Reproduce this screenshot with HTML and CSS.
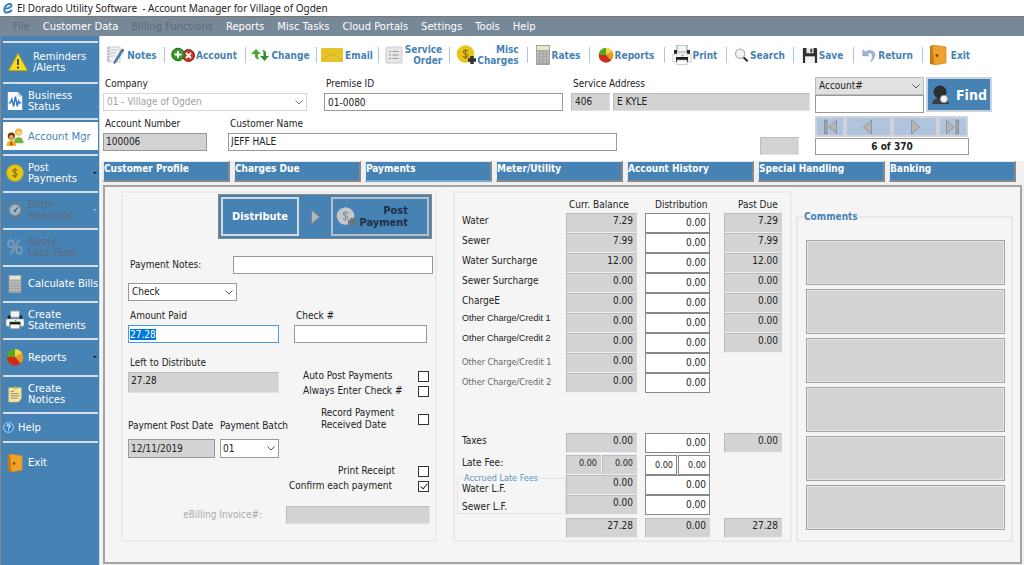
FILE: index.html
```html
<!DOCTYPE html>
<html lang="en">
<head>
    <meta charset="UTF-8">
    <meta name="viewport" content="width=device-width, initial-scale=1.0">
    <title>El Dorado Utility Software</title>
    <link rel="stylesheet" href="styles.css">
</head>
<body>
    <!-- icons used more than once -->
    <svg class="sprite" aria-hidden="true">
        <symbol id="i-coin" viewBox="0 0 20 20">
            <circle cx="10" cy="10" r="9.3" fill="#e8c51c" stroke="#cfa912"/>
            <path d="M12.8 7.2C12 6 8 5.600 7.500 7.600c-.3 2 5 2 5 4.300-.2 2.200-4.200 2-5.400.5M10 4.500v11" fill="none" stroke="#8c7310" stroke-width="1.300"/>
        </symbol>
        <symbol id="i-calc" viewBox="0 0 20 20">
            <path d="M3 0h14v20H3z" fill="#a3a3a3"/>
            <path d="M4 1h12v4H4z" fill="#e4e8cf"/>
            <path d="M4 7.500h12M4 10.500h12M4 13.500h12M4 16.500h12" stroke="#c4c4c4" stroke-width="2" stroke-dasharray="2 1.300"/>
        </symbol>
        <symbol id="i-print" viewBox="0 0 20 20">
            <path d="M5 0h10v7H5z" fill="#f4f4f4" stroke="#999"/>
            <path d="M2 5h3v4h10V5h3v6H2z" fill="#222"/>
            <rect x="0" y="9" width="20" height="8" rx="2" fill="#f2f2f2" stroke="#bbb" stroke-width=".6"/>
            <path d="M4 12h12v5H4z" fill="#1d1d1d"/>
            <path d="M5 15h10v4.500H5z" fill="#fff" stroke="#aaa" stroke-width=".6"/>
            <path d="M9.500 10h2v1.200h-2z" fill="#4c3"/>
        </symbol>
        <symbol id="i-pie" viewBox="0 0 20 20">
            <circle cx="10" cy="10.500" r="9" fill="#a8801c"/>
            <path d="M10 10V1a9 9 0 0 0-9 9z" fill="#58a51f"/>
            <path d="M10 10V1a9 9 0 0 1 8 5z" fill="#f2d445"/>
            <path d="M10 10l8-4a9 9 0 0 1-2 11z" fill="#e89a26"/>
            <path d="M10 10l6 7A9 9 0 0 1 1 10z" fill="#cf2a1b"/>
        </symbol>
        <symbol id="i-door" viewBox="0 0 20 20">
            <path d="M2 1l5-1v20l-5-1z" fill="#c77a14"/>
            <path d="M4 0l14 2v16L6 20z" fill="#eea12b" stroke="#d38419" stroke-width=".7"/>
            <circle cx="9" cy="10.500" r="1.400" fill="#7c4b08"/>
        </symbol>
        <symbol id="i-first" viewBox="0 0 16 16">
            <path d="M2.500 1h2.600v14H2.500z" fill="#a5a5a5" stroke="#777" stroke-width=".6"/>
            <path d="M14.500 1.500v13L7 8z" fill="#b5b5b5" stroke="#777" stroke-width=".6"/>
        </symbol>
        <symbol id="i-tri" viewBox="0 0 16 16">
            <path d="M4.500 1v14L12.500 8z" fill="#b5b5b5" stroke="#777" stroke-width=".6"/>
        </symbol>
    </svg>

    <header class="titlebar">
        <svg class="logo" viewBox="0 0 12 12"><path d="M2.500 6.500C5 7 9.500 5.500 9.500 3.500 9 1 5 1.500 3 5c-1.800 3.500-.5 6 2.500 5.500 2-.3 3.500-1.500 4.500-2.500" fill="none" stroke="#2f7fc0" stroke-width="1.900"/></svg>
        <span>El Dorado Utility Software&nbsp; - Account Manager for Village of Ogden</span>
    </header>

    <nav class="menubar">
        <button disabled>File</button>
        <button>Customer Data</button>
        <button disabled>Billing Functions</button>
        <button>Reports</button>
        <button>Misc Tasks</button>
        <button>Cloud Portals</button>
        <button>Settings</button>
        <button>Tools</button>
        <button>Help</button>
    </nav>

    <div class="shell">
        <aside class="sidebar">
            <button class="side first">
                <svg viewBox="0 0 20 20"><path d="M10 1.500L19.300 18.500H.7z" fill="#f5dc1c" stroke="#c9a50c" stroke-linejoin="round"/><path d="M10 7v6M10 14.500v2" stroke="#333" stroke-width="1.700"/></svg>
                <span>Reminders<br>/Alerts</span>
            </button>
            <button class="side short">
                <svg viewBox="0 0 20 20"><path d="M2 0h11l5 5v15H2z" fill="#f6f9fc"/><path d="M13 0v5h5z" fill="#c3d3e4"/><path d="M3 12h2l1.500-4 2 8 2-11 2 11 1.500-6 1 2h2" fill="none" stroke="#2474c6" stroke-width="1.500"/></svg>
                <span>Business<br>Status</span>
            </button>
            <button class="side short active">
                <svg viewBox="0 0 20 20"><circle cx="14" cy="4.500" r="4" fill="#e8b32a"/><circle cx="14" cy="5.500" r="2.600" fill="#f6cf8e"/><path d="M8.500 17c0-9 11-9 11 0z" fill="#6db33c"/><circle cx="6" cy="9" r="4" fill="#6e3a14"/><circle cx="6" cy="10.300" r="2.600" fill="#e8a35b"/><path d="M.5 20c0-8 11-8 11 0z" fill="#e9b520"/><path d="M6 14l1.500 5h-3z" fill="#c62a1d"/></svg>
                <span>Account Mgr</span>
            </button>
            <button class="side has-menu">
                <svg><use href="#i-coin"/></svg>
                <span>Post<br>Payments</span>
            </button>
            <button class="side has-menu" disabled>
                <svg viewBox="0 0 20 20"><circle cx="10" cy="10" r="7.500" fill="#9db6cb" stroke="#687e92" stroke-width="3"/><path d="M10 11l3-4" stroke="#50667a" stroke-width="1.500"/><circle cx="10" cy="11" r="1.300" fill="#50667a"/></svg>
                <span>Enter<br>Readings</span>
            </button>
            <button class="side" disabled>
                <svg viewBox="0 0 20 20"><g fill="none" stroke="#7f9ab5" stroke-width="2"><ellipse cx="5.500" cy="6.500" rx="3.200" ry="4"/><ellipse cx="14.500" cy="13.500" rx="3.200" ry="4"/><path d="M15 2L5 18"/></g></svg>
                <span>Apply<br>Late Fees</span>
            </button>
            <button class="side short">
                <svg><use href="#i-calc"/></svg>
                <span>Calculate Bills</span>
            </button>
            <button class="side">
                <svg><use href="#i-print"/></svg>
                <span>Create<br>Statements</span>
            </button>
            <button class="side has-menu">
                <svg><use href="#i-pie"/></svg>
                <span>Reports</span>
            </button>
            <button class="side">
                <svg viewBox="0 0 20 20"><path d="M3 3h14v12l-3 4H3z" fill="#f3e6a4" stroke="#d1bd62" stroke-width=".6"/><path d="M5 7h4M5 9.500h9M5 12h10M5 14.500h8" stroke="#8d8460"/><path d="M10 1l3 4H8z" fill="#e2c22c"/></svg>
                <span>Create<br>Notices</span>
            </button>
            <button class="side help">
                <svg viewBox="0 0 12 12"><circle cx="6" cy="6" r="5.300" fill="#2f7bd0" stroke="#cfe0f2"/><path d="M4.300 4.800c0-2.300 3.500-2.200 3.500-.2C7.800 5.800 6 5.800 6 7.200M6 8.200v1.300" fill="none" stroke="#fff" stroke-width="1.200"/></svg>
                <span>Help</span>
            </button>
            <button class="side exit">
                <svg><use href="#i-door"/></svg>
                <span>Exit</span>
            </button>
        </aside>

        <main class="main">
            <div class="toolbar">
                <button>
                    <svg viewBox="0 0 20 20"><path d="M2 2h12v15H2z" fill="#f3f3f3" stroke="#ccc"/><path d="M4 5h8M4 8h6M4 11h5" stroke="#b8c4d0"/><path d="M1 3h3M1 6h3M1 9h3M1 12h3M1 15h3" stroke="#999"/><path d="M18 5l-8 12-2 2 .5-3L16 4z" fill="#4f86bd" stroke="#34506c" stroke-width=".6"/></svg>
                    <span>Notes</span>
                </button>
                <button>
                    <svg class="wide" viewBox="0 0 24 20"><circle cx="17.500" cy="10.500" r="6" fill="#c3392b" stroke="#7e1c12"/><path d="M15 8l5 5M20 8l-5 5" stroke="#fff" stroke-width="1.800"/><circle cx="7" cy="9.500" r="6.300" fill="#3a9a2b" stroke="#1f6a14"/><path d="M7 6v7M3.500 9.500h7" stroke="#fff" stroke-width="2"/></svg>
                    <span>Account</span>
                </button>
                <button>
                    <svg viewBox="0 0 20 20"><path d="M1 9l5-5 5 5H8v3c0 1 1 2 2 2-3 1-5-1-5-3V9z" fill="#4ba62e"/><path d="M10 11l4.500 5 4.500-5h-3V8c0-2-2-3-4-3 1 1 1.500 1.500 1.500 3v3z" fill="#2e8f27"/></svg>
                    <span>Change</span>
                </button>
                <button>
                    <svg class="wide" viewBox="0 0 24 20"><rect x="1" y="3" width="22" height="14" rx="1.500" fill="#e6c52c"/><path d="M1 4l11 7 11-7M1 16l8-6M23 16l-8-6" fill="none" stroke="#d6b220"/></svg>
                    <span>Email</span>
                </button>
                <button>
                    <svg viewBox="0 0 20 20"><rect x="2" y="2" width="16" height="16" rx="1" fill="#e6e6e6" stroke="#ccc"/><path d="M5 6.500h2M5 10h2M5 13.500h2M8.500 6.500h6M8.500 10h6M8.500 13.500h6" stroke="#999"/></svg>
                    <span>Service<br>Order</span>
                </button>
                <button>
                    <svg viewBox="0 0 20 20"><circle cx="9.500" cy="9" r="8.800" fill="#e8c51c"/><path d="M12 6.500c-1-1.500-4.500-1.500-4.700.4 0 2 4.700 1.600 4.700 4-.2 2-4 2-5 .3M9.500 4v10" fill="none" stroke="#8c7310" stroke-width="1.200"/><path d="M16 11v8M12 15h8" stroke="#333" stroke-width="3.500"/></svg>
                    <span>Misc<br>Charges</span>
                </button>
                <button>
                    <svg class="slim" viewBox="3 0 14 20"><path d="M3 0h14v20H3z" fill="#a3a3a3"/><path d="M4 1h12v4H4z" fill="#e4e8cf"/><path d="M4 7.500h12M4 10.500h12M4 13.500h12M4 16.500h12" stroke="#c4c4c4" stroke-width="2" stroke-dasharray="2 1.300"/></svg>
                    <span>Rates</span>
                </button>
                <button>
                    <svg class="slim"><use href="#i-pie"/></svg>
                    <span>Reports</span>
                </button>
                <button>
                    <svg><use href="#i-print"/></svg>
                    <span>Print</span>
                </button>
                <button>
                    <svg class="slim" viewBox="0 0 18 20"><path d="M11 12l5.500 5" stroke="#333" stroke-width="2.500"/><circle cx="8" cy="8.500" r="5.200" fill="#eef3f6" stroke="#b5b5b5" stroke-width="1.500"/></svg>
                    <span>Search</span>
                </button>
                <button>
                    <svg class="slim" viewBox="0 0 18 20"><path d="M1 2h15l1 1v16H1z" fill="#2d2f33"/><path d="M5 2h8v6H5z" fill="#e9e9e9"/><path d="M9.500 3h2v4h-2z" fill="#2d2f33"/><path d="M3.500 11.500h11V19h-11z" fill="#f4f4f4"/></svg>
                    <span>Save</span>
                </button>
                <button>
                    <svg class="slim" viewBox="0 0 18 20"><path d="M2 4v7h7L6.800 8.600C12 6 15 10 10.500 18 20 11 15.500 1 4.500 6.500z" fill="#9db3d3" stroke="#8299bd" stroke-width=".5"/></svg>
                    <span>Return</span>
                </button>
                <button>
                    <svg><use href="#i-door"/></svg>
                    <span>Exit</span>
                </button>
            </div>

            <section class="account">
                <div class="account-fields">
                    <div class="line">
                        <div class="field company">
                            <label for="company">Company</label>
                            <select id="company" disabled><option>01 - Village of Ogden</option></select>
                        </div>
                        <div class="field premise">
                            <label for="premise">Premise ID</label>
                            <input id="premise" type="text" value="01-0080">
                        </div>
                        <div class="field address">
                            <label for="street-no">Service Address</label>
                            <div class="pair">
                                <input id="street-no" class="gray" type="text" value="406" readonly>
                                <input class="gray street" type="text" value="E KYLE" aria-label="Street" readonly>
                            </div>
                        </div>
                    </div>
                    <div class="line">
                        <div class="field acct">
                            <label for="acct">Account Number</label>
                            <input id="acct" class="gray framed" type="text" value="100006" readonly>
                        </div>
                        <div class="field customer">
                            <label for="customer">Customer Name</label>
                            <input id="customer" type="text" value="JEFF HALE">
                        </div>
                        <input class="gray flag" type="text" aria-label="Status" readonly>
                    </div>
                </div>
                <div class="lookup">
                    <div class="find-row">
                        <div class="find-by">
                            <select class="shaded" aria-label="Find by"><option>Account#</option></select>
                            <input type="text" aria-label="Find value">
                        </div>
                        <button class="find">
                            <svg viewBox="0 0 20 20"><circle cx="9" cy="7" r="6.500" fill="#2b2d30"/><path d="M1 19c0-3 3-5 5-6h6c3 1 6 3 6 6z" fill="#3b3d40"/><circle cx="13" cy="14" r="3.700" fill="#f3f6f8" stroke="#999"/></svg>
                            <span>Find</span>
                        </button>
                    </div>
                    <div class="pager">
                        <button aria-label="First"><svg><use href="#i-first"/></svg></button>
                        <button class="step" aria-label="Previous"><svg class="flip"><use href="#i-tri"/></svg></button>
                        <button class="step" aria-label="Next"><svg><use href="#i-tri"/></svg></button>
                        <button aria-label="Last"><svg class="flip"><use href="#i-first"/></svg></button>
                    </div>
                    <div class="count">6 of 370</div>
                </div>
            </section>

            <div class="work">
                <nav class="tabs">
                    <button>Customer Profile</button>
                    <button>Charges Due</button>
                    <button class="current">Payments</button>
                    <button>Meter/Utility</button>
                    <button>Account History</button>
                    <button>Special Handling</button>
                    <button>Banking</button>
                </nav>

                <div class="panel">
                    <section class="group payment">
                        <div class="actions">
                            <button>Distribute</button>
                            <svg class="arrow"><use href="#i-tri"/></svg>
                            <button class="post" disabled>
                                <svg viewBox="0 0 20 20"><circle cx="9.500" cy="9" r="8.800" fill="#c3c7ca"/><path d="M12 6.500c-1-1.500-4.500-1.500-4.700.4 0 2 4.700 1.600 4.700 4-.2 2-4 2-5 .3M9.500 4v10" fill="none" stroke="#8e9396" stroke-width="1.200"/><path d="M16 11v8M12 15h8" stroke="#6c7377" stroke-width="3.500"/></svg>
                                <span>Post<br>Payment</span>
                            </button>
                        </div>
                        <div class="notes">
                            <label for="notes">Payment Notes:</label>
                            <input id="notes" type="text">
                        </div>
                        <div class="pay-cols">
                            <div class="pay-left">
                                <select class="method" aria-label="Payment method"><option>Check</option></select>
                                <div class="field">
                                    <label for="amount">Amount Paid</label>
                                    <input id="amount" type="text" value="27.28">
                                </div>
                                <div class="field left-amt">
                                    <label for="left">Left to Distribute</label>
                                    <input id="left" class="gray" type="text" value="27.28" readonly>
                                </div>
                                <div class="dates">
                                    <div class="field">
                                        <label for="post-date">Payment Post Date</label>
                                        <input id="post-date" class="gray framed" type="text" value="12/11/2019" readonly>
                                    </div>
                                    <div class="field">
                                        <label for="batch">Payment Batch</label>
                                        <select id="batch"><option>01</option></select>
                                    </div>
                                </div>
                            </div>
                            <div class="pay-right">
                                <div class="field check-no">
                                    <label for="check-no">Check #</label>
                                    <input id="check-no" type="text">
                                </div>
                                <div class="checks">
                                    <label class="tick"><span>Auto Post Payments</span><input type="checkbox"></label>
                                    <label class="tick"><span>Always Enter Check #</span><input type="checkbox"></label>
                                </div>
                                <label class="tick record"><span>Record Payment<br>Received Date</span><input type="checkbox"></label>
                                <div class="checks">
                                    <label class="tick"><span>Print Receipt</span><input type="checkbox"></label>
                                    <label class="tick"><span>Confirm each payment</span><input type="checkbox" checked></label>
                                </div>
                            </div>
                        </div>
                        <div class="ebilling">
                            <label for="ebilling">eBilling Invoice#:</label>
                            <input id="ebilling" class="gray" type="text" readonly>
                        </div>
                    </section>

                    <section class="group balances">
                        <table>
                            <colgroup><col class="c-name"><col class="c-bal"><col class="c-dist"><col class="c-due"></colgroup>
                            <thead>
                                <tr><td></td><th>Curr. Balance</th><th>Distribution</th><th>Past Due</th></tr>
                            </thead>
                            <tbody>
                                <tr><th>Water</th><td><output>7.29</output></td><td><input type="text" value="0.00" aria-label="Water"></td><td><output>7.29</output></td></tr>
                                <tr><th>Sewer</th><td><output>7.99</output></td><td><input type="text" value="0.00" aria-label="Sewer"></td><td><output>7.99</output></td></tr>
                                <tr><th>Water Surcharge</th><td><output>12.00</output></td><td><input type="text" value="0.00" aria-label="Water Surcharge"></td><td><output>12.00</output></td></tr>
                                <tr><th>Sewer Surcharge</th><td><output>0.00</output></td><td><input type="text" value="0.00" aria-label="Sewer Surcharge"></td><td><output>0.00</output></td></tr>
                                <tr><th>ChargeE</th><td><output>0.00</output></td><td><input type="text" value="0.00" aria-label="ChargeE"></td><td><output>0.00</output></td></tr>
                                <tr class="other"><th>Other Charge/Credit 1</th><td><output>0.00</output></td><td><input type="text" value="0.00" aria-label="Other Charge/Credit 1"></td><td><output>0.00</output></td></tr>
                                <tr class="other"><th>Other Charge/Credit 2</th><td><output>0.00</output></td><td><input type="text" value="0.00" aria-label="Other Charge/Credit 2"></td><td><output>0.00</output></td></tr>
                                <tr class="other muted"><th>Other Charge/Credit 1</th><td><output>0.00</output></td><td><input type="text" value="0.00" aria-label="Other Charge/Credit 1"></td><td></td></tr>
                                <tr class="other muted"><th>Other Charge/Credit 2</th><td><output>0.00</output></td><td><input type="text" value="0.00" aria-label="Other Charge/Credit 2"></td><td></td></tr>
                            </tbody>
                            <tbody class="after-charges">
                                <tr><th>Taxes</th><td><output>0.00</output></td><td><input type="text" value="0.00" aria-label="Taxes"></td><td><output>0.00</output></td></tr>
                            </tbody>
                            <tbody class="after-taxes">
                                <tr>
                                    <th>Late Fee:</th>
                                    <td><div class="split"><output>0.00</output><output>0.00</output></div></td>
                                    <td><div class="split"><input type="text" value="0.00" aria-label="Late fee 1"><input type="text" value="0.00" aria-label="Late fee 2"></div></td>
                                    <td></td>
                                </tr>
                                <tr>
                                    <td class="accrued" rowspan="2">
                                        <fieldset>
                                            <legend>Accrued Late Fees</legend>
                                            <label for="water-lf">Water L.F.</label>
                                            <label for="sewer-lf">Sewer L.F.</label>
                                        </fieldset>
                                    </td>
                                    <td><output>0.00</output></td><td><input id="water-lf" type="text" value="0.00"></td><td></td>
                                </tr>
                                <tr><td><output>0.00</output></td><td><input id="sewer-lf" type="text" value="0.00"></td><td></td></tr>
                            </tbody>
                            <tfoot>
                                <tr><td></td><td><output>27.28</output></td><td><output>0.00</output></td><td><output>27.28</output></td></tr>
                            </tfoot>
                        </table>
                    </section>

                    <fieldset class="comments">
                        <legend>Comments</legend>
                        <textarea aria-label="Comment 1" readonly></textarea>
                        <textarea aria-label="Comment 2" readonly></textarea>
                        <textarea aria-label="Comment 3" readonly></textarea>
                        <textarea aria-label="Comment 4" readonly></textarea>
                        <textarea aria-label="Comment 5" readonly></textarea>
                        <textarea aria-label="Comment 6" readonly></textarea>
                    </fieldset>
                </div>
            </div>
        </main>
    </div>
    <script>
        var amount = document.getElementById("amount");
        amount.focus();
        amount.select();
    </script>
</body>
</html>
```

FILE: styles.css
```css
* {
    box-sizing: border-box;
}

body {
    margin: 0;
    min-height: 100vh;
    display: flex;
    flex-direction: column;
    background: #fff;
    color: #222;
    font-family: "DejaVu Sans Condensed", "DejaVu Sans", sans-serif;
    font-stretch: condensed;
    font-size: 10px;
    line-height: 12px;
}

button, input, select, textarea {
    font: inherit;
    color: inherit;
    margin: 0;
    border-radius: 0;
}

button {
    border: none;
    background: none;
    padding: 0;
    white-space: nowrap;
}

svg {
    flex: none;
    width: 20px;
    height: 20px;
}

.sprite {
    position: absolute;
    width: 0;
    height: 0;
}

/* title and menu */
.titlebar {
    display: flex;
    align-items: center;
    gap: 3px;
    height: 16px;
    padding-left: 2px;
    font-family: "Noto Sans", "Open Sans", sans-serif;
    font-stretch: normal;
    font-size: 10px;
}

.logo {
    width: 12px;
    height: 12px;
}

.menubar {
    display: flex;
    align-items: center;
    gap: 13px;
    height: 20px;
    padding-left: 13px;
    background: #778899;
    border-top: 1px solid #777;
    color: #fff;
    font-family: "DejaVu Sans", sans-serif;
    font-stretch: normal;
}

.menubar button:disabled {
    color: #5f6b78;
}

.shell {
    flex: 1;
    display: flex;
}

/* left navigation */
.sidebar {
    flex: none;
    width: 99px;
    padding: 5px 1px 0 2px;
    border-left: 1px solid #888;
    background: #4682b4;
    color: #fff;
    font-family: "DejaVu Sans", sans-serif;
    font-stretch: normal;
}

.side {
    display: flex;
    align-items: center;
    gap: 4px;
    width: 100%;
    height: 37px;
    padding: 0 0 1px 3px;
    border-top: 2px solid #d5dde6;
    text-align: left;
    line-height: 11px;
    position: relative;
}

.side svg {
    width: 18px;
}

.side.short {
    height: 36px;
}

.side.first {
    height: 41px;
    gap: 5px;
    padding-left: 5px;
}

.side.first svg {
    width: 20px;
}

.side.active {
    background: linear-gradient(#4682b4 2px, #fff 2px, #fff 30px, #4682b4 30px);
    color: #4682b4;
}

.side:disabled {
    color: #5f6c7a;
}

.has-menu::after {
    content: "";
    position: absolute;
    right: 1px;
    top: 16px;
    border: 2px solid transparent;
    border-top-color: #111;
}

.has-menu:disabled::after {
    border-top-color: #9bb;
}

.side.help {
    height: 29px;
    padding-left: 0;
}

.side.help svg {
    width: 11px;
    height: 11px;
}

.side.exit {
    height: 42px;
}

/* toolbar */
.main {
    flex: 1;
    display: flex;
    flex-direction: column;
    min-width: 0;
    padding-left: 1px;
    border-left: 1px solid #c5d8ea;
}

.toolbar {
    display: grid;
    grid-template-columns: 64px 81px 71px 62px 71px 78px 62px 75px 62px 67px 60px 69px 60px;
    align-items: center;
    height: 38px;
    color: #4682b4;
    font-weight: bold;
    line-height: 11px;
}

.toolbar button {
    display: flex;
    align-items: center;
    justify-content: center;
    gap: 1px;
    height: 16px;
    padding-right: 2px;
    border-right: 1px solid #a9c5e0;
    text-align: right;
}

.toolbar button:last-child {
    border-right: none;
    padding-right: 8px;
    gap: 3px;
}

.toolbar .wide {
    width: 24px;
}

.toolbar .slim {
    width: 16px;
}

/* form controls */
input, select {
    height: 18px;
    padding: 0 3px;
    border: 1px solid #999;
    background-color: #fff;
    outline: none;
}

select {
    appearance: none;
    background-image: url("data:image/svg+xml,%3Csvg xmlns='http://www.w3.org/2000/svg' width='8' height='5'%3E%3Cpath d='M.5.5L4 4 7.500.5' fill='none' stroke='%23555'/%3E%3C/svg%3E");
    background-repeat: no-repeat;
    background-position: right 3px center;
}

select:disabled {
    border-color: #ccc;
    color: #888;
    opacity: .8;
}

.shaded {
    background-color: #e1e1e1;
    border-color: #bbb;
}

.gray {
    background-color: #d3d3d3;
    border-color: #bcbcbc #e0e0e0 #e0e0e0 #bcbcbc;
}

.framed {
    border-color: #999;
}

.field {
    display: flex;
    flex-direction: column;
    gap: 3px;
}

.field label {
    padding-left: 2px;
    white-space: nowrap;
}

/* account header */
.account {
    display: flex;
    gap: 5px;
    height: 87px;
    padding: 3px 0 0 2px;
}

.account-fields {
    width: 707px;
    display: flex;
    flex-direction: column;
    gap: 7px;
}

.line {
    display: flex;
    align-items: flex-end;
}

.account-fields .line:first-child {
    padding-top: 1px;
}

.company {
    width: 204px;
    margin-right: 17px;
}

.premise {
    width: 239px;
    margin-right: 8px;
}

.address {
    flex: 1;
}

.pair {
    display: flex;
    gap: 3px;
}

.pair input {
    width: 39px;
    padding-bottom: 2px;
}

.pair .street {
    flex: 1;
}

.acct {
    width: 104px;
    margin-right: 21px;
}

.acct input, .customer input {
    padding: 0 2px 1px;
}

.customer {
    width: 389px;
}

.flag {
    width: 39px;
    margin: 0 11px -4px auto;
}

.find-row {
    display: flex;
    gap: 2px;
}

.find-by {
    display: flex;
    flex-direction: column;
    width: 109px;
}

.find {
    display: flex;
    align-items: center;
    gap: 5px;
    width: 66px;
    height: 35px;
    padding-left: 3px;
    border: 2px solid #ccd3da;
    background: #4682b4;
    color: #fff;
    font-size: 14px;
    font-weight: bold;
}

.pager {
    display: flex;
    width: 153px;
    margin-top: 3px;
}

.pager button {
    display: flex;
    align-items: center;
    justify-content: center;
    width: 30px;
    height: 21px;
    border: 2px solid #d0d4da;
    background: #b0c4de;
}

.pager .step {
    flex: 1;
}

.pager svg, .arrow {
    width: 16px;
    height: 16px;
}

.flip {
    transform: scaleX(-1);
}

.count {
    width: 154px;
    height: 17px;
    margin-top: 1px;
    border: 1px solid #999;
    text-align: center;
    font-weight: bold;
    line-height: 15px;
}

/* tabs and panel */
.work {
    flex: 1;
    display: flex;
    flex-direction: column;
    background: #f0f0f0;
    padding: 0 2px 3px 2px;
}

.tabs {
    display: grid;
    grid-template-columns: repeat(7, 1fr);
    gap: 4px;
    margin: 0 6px 3px 0;
}

.tabs button {
    height: 21px;
    padding: 0 0 4px;
    border: 1px solid #e8e8e8;
    border-right: 2px solid #888;
    border-bottom: 2px solid #888;
    background: #4682b4;
    color: #fff;
    font-weight: bold;
    text-align: left;
}

.tabs .current {
    border-bottom-color: #7aa7d0;
}

.panel {
    flex: 1;
    display: grid;
    grid-template-columns: 316px 338px 1fr;
    align-items: start;
    padding: 4px 7px 20px 16px;
    border: 2px solid #a5a5a5;
    background: #f5f5f5;
}

.group {
    height: 351px;
    border: 2px solid #ebebeb;
}

/* payment entry */
.payment {
    display: flex;
    flex-direction: column;
    padding: 1px 2px 0 5px;
}

.actions {
    display: flex;
    align-items: center;
    justify-content: space-between;
    align-self: flex-end;
    width: 214px;
    height: 45px;
    margin-right: 1px;
    padding: 2px;
    border: 1px solid #888;
    background: #4682b4;
    color: #fff;
    font-size: 11px;
    font-weight: bold;
}

.actions button {
    width: 78px;
    height: 39px;
    border: 2px solid #d5d9de;
}

.actions .post {
    display: flex;
    align-items: center;
    justify-content: space-between;
    width: 98px;
    padding: 0 19px 0 3px;
    border-color: #b9bfc5;
    color: #1d3045;
    text-align: right;
}

.notes {
    display: flex;
    justify-content: space-between;
    align-items: center;
    margin-top: 17px;
    padding-left: 2px;
}

.notes input {
    width: 200px;
}

.pay-cols {
    display: flex;
    justify-content: space-between;
    margin-top: 9px;
}

.pay-left {
    width: 158px;
}

.method {
    display: block;
    width: 109px;
    margin-bottom: 9px;
}

#amount, #left {
    width: 151px;
}

#amount {
    padding-left: 1px;
    border-color: #4a9ade;
}

#amount::selection {
    background: #0078d7;
    color: #fff;
}

.left-amt {
    margin-top: 14px;
}

#left {
    height: 21px;
    padding: 0 2px 4px;
}

.dates {
    display: flex;
    gap: 5px;
    margin-top: 27px;
}

.dates label {
    padding-left: 0;
}

.dates .field {
    gap: 7px;
}

#post-date {
    width: 87px;
    height: 19px;
    padding-left: 2px;
}

#batch {
    width: 59px;
    height: 19px;
    padding-left: 2px;
}

.pay-right {
    width: 146px;
    padding-top: 27px;
}

.check-no {
    width: 133px;
    margin: 0 0 27px 7px;
}

.checks {
    display: flex;
    flex-direction: column;
    gap: 3px;
}

.tick {
    display: flex;
    align-items: center;
    justify-content: space-between;
    padding: 0 4px 0 3px;
}

.checks .tick {
    padding-left: 16px;
}

.tick input {
    appearance: none;
    flex: none;
    display: grid;
    place-items: center;
    width: 11px;
    height: 11px;
    padding: 0;
    border-color: #333;
}

.tick input:checked::after {
    content: "";
    width: 3px;
    height: 6px;
    margin-bottom: 2px;
    border: solid #333;
    border-width: 0 1px 1px 0;
    transform: rotate(40deg);
}

.record {
    margin: 10px 0 34px;
    padding-left: 34px;
}

.record + .checks .tick {
    padding-left: 2px;
}

.record + .checks .tick:first-child {
    padding-left: 51px;
}

.ebilling {
    display: flex;
    align-items: center;
    justify-content: flex-end;
    gap: 24px;
    margin-top: 14px;
    padding-right: 3px;
    color: #aaa;
}

.ebilling input {
    width: 144px;
}

/* balances */
.balances {
    margin-left: 16px;
    width: 339px;
    padding-left: 2px;
}

.balances table {
    table-layout: fixed;
    width: 325px;
    border-collapse: collapse;
}

.c-name {
    width: 109px;
}

.c-bal {
    width: 79px;
}

.c-dist {
    width: 79px;
}

.balances th, .balances td {
    height: 20px;
    padding: 0;
    font-weight: normal;
    text-align: left;
    vertical-align: top;
}

.balances th {
    padding: 2px 0 0 5px;
    white-space: nowrap;
}

.balances thead th {
    padding: 6px 0 0 3px;
}

.balances thead th:nth-child(3) {
    padding-left: 10px;
}

.balances thead th:nth-child(4) {
    padding-left: 14px;
}

.balances output, .balances input {
    display: block;
    width: 71px;
    height: 20px;
    padding: 0 3px;
    text-align: right;
}

.balances output {
    padding-top: 1px;
    border: 1px solid;
    border-color: #bcbcbc #d3d3d3 #eee #bcbcbc;
    background: #d3d3d3;
}

.balances input {
    border-color: #888;
    padding-bottom: 1px;
}

.balances td:nth-last-child(2) > * {
    width: 65px;
}

.balances td:last-child > output {
    width: 58px;
    margin-left: auto;
}

.balances .other th {
    padding-top: 0;
    font-family: "Liberation Sans", sans-serif;
    font-size: 9px;
    line-height: 10px;
}

.balances .muted th {
    padding-top: 4px;
    font-family: inherit;
    color: #666;
}

.after-charges::before {
    content: "";
    display: block;
    height: 40px;
}

.after-taxes::before {
    content: "";
    display: block;
    height: 2px;
}

.split {
    display: flex;
    gap: 1px;
    width: 71px;
    font-size: 9px;
}

.split output, .split input {
    flex: 1;
    width: 0;
    min-width: 0;
}

.accrued fieldset {
    display: flex;
    flex-direction: column;
    gap: 6px;
    height: 39px;
    margin: 0;
    padding: 2px 0 0 4px;
    border: 1px solid #e3e3e3;
}

.accrued legend {
    padding: 0 2px;
    margin-left: 0;
    color: #5b93c4;
    font-size: 9px;
    line-height: 6px;
}

tfoot::before {
    content: "";
    display: block;
    height: 3px;
}

/* comments */
.comments {
    display: flex;
    flex-direction: column;
    gap: 4px;
    margin: 20px 0 0 21px;
    min-width: 0;
    height: 331px;
    padding: 17px 6px 0 8px;
    border: 2px solid #e8e8e8;
}

.comments legend {
    margin-left: -3px;
    padding: 0 1px;
    color: #4682b4;
    font-weight: bold;
}

.comments textarea {
    display: block;
    height: 45px;
    border: 1px solid #a3a3a3;
    outline: 1px solid #e6e6e6;
    outline-offset: -2px;
    background: #d3d3d3;
    resize: none;
}
```
